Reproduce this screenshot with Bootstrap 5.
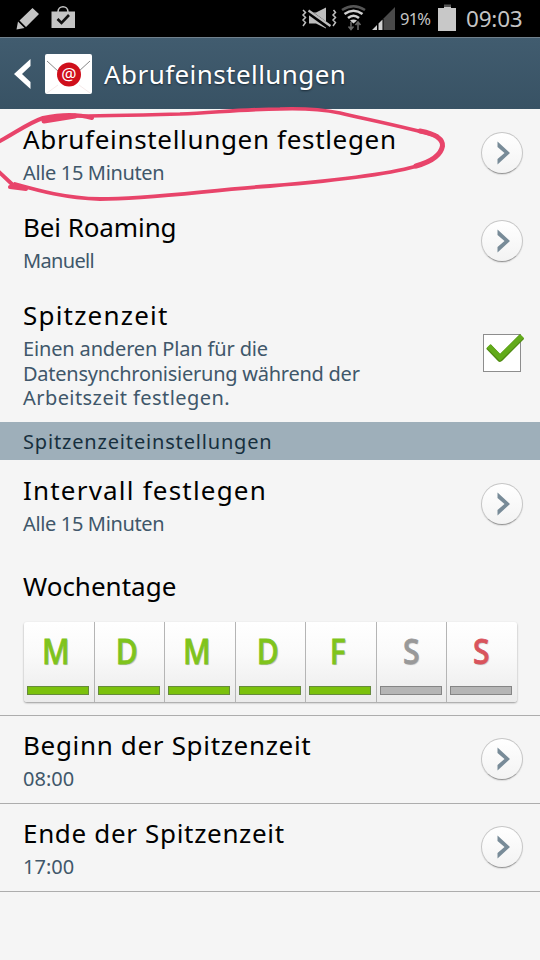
<!DOCTYPE html>
<html lang="de">
<head>
<meta charset="utf-8">
<meta name="viewport" content="width=device-width, initial-scale=1">
<title>Abrufeinstellungen</title>
<link href="https://cdn.jsdelivr.net/npm/bootstrap@5.3.0/dist/css/bootstrap.min.css" rel="stylesheet">
<style>
  body { font-family: "Noto Sans", sans-serif; background: #f5f5f5; width: 540px; height: 960px; overflow: hidden; color: #000; }
  svg { display: block; flex: none; }
  .status-bar { height: 37px; background: #000; color: #c4c4c4; }
  .status-pct { font-size: 16.5px; line-height: 20px; letter-spacing: -.8px; width: 32px; }
  .status-clock { font-size: 22.5px; line-height: 28px; letter-spacing: -.2px; width: 58px; }
  .title-bar { height: 72px; background: linear-gradient(#415c6f, #385264); border-top: 1px solid #71818d; color: #fff; padding-left: 14px; }
  .envelope { margin-left: 14px; }
  .page-title { font-size: 26px; line-height: 32px; letter-spacing: .43px; font-weight: 400; text-shadow: 0 1px 2px #1c2c38; margin-left: 12px; }
  .setting { height: 88px; padding: 14px 17px 0 24px; }
  .setting-tall { height: 137px; }
  .setting-line { padding-top: 13px; border-bottom: 1px solid #adadad; }
  .setting h2, .weekdays h2 { font-size: 26px; line-height: 32px; font-weight: 400; margin: 0 0 0 -1px; white-space: nowrap; }
  .setting p { font-size: 20px; line-height: 24.5px; color: #40576a; margin: 6px 0 0 -1px; white-space: nowrap; }
  .go { width: 42px; height: 42px; margin-top: 9px; border: 1px solid #c6c6c6; border-bottom-color: #999; background: linear-gradient(#fff, #f3f3f3); box-shadow: 0 1px 1px #ddd; }
  .go svg { margin-left: 3px; }
  .tick { margin: 30px -1px 0 0; }
  .section-head { height: 38px; background: #9eafba; color: #172f3e; font-size: 20px; letter-spacing: .83px; padding: 1px 23px 0; }
  .weekdays { height: 168px; padding: 22px 24px 0; border-bottom: 1px solid #adadad; }
  .days { height: 80px; width: 493px; margin: 20px 0 0; border-radius: 3px; background: linear-gradient(#fff, #fafafa 40%, #ebebeb); box-shadow: 0 1px 2px #999; }
  .day { font-size: 35px; line-height: 42px; font-weight: 500; padding: 8px 4px 7px 3px; border-left: 1px solid #b5b5b5; color: #7fc41c; flex: 1 1 0; min-width: 0; }
  .day:first-child { border-left-color: transparent; padding-left: 2px; }
  .day span { display: block; transform: scaleX(.86); text-align: center; margin-left: -5px; text-shadow: 1px 1px 1px #bbb; -webkit-text-stroke: .8px currentColor; }
  .day i { display: block; height: 9px; width: 62px; background: #7bc10c; border: 1px solid #668a3c; }
  .day-off { color: #999; }
  .day-sun { color: #d9545c; }
  .day-off i, .day-sun i { background: #b5b5b5; border-color: #858585; }
  .day-off span, .day-sun span { margin-left: 0; }
  .s1 { letter-spacing: .67px; } .s2 { letter-spacing: -.1px; } .s3 { letter-spacing: 1.2px; }
  .s4 { letter-spacing: -.35px; } .s5 { letter-spacing: -.67px; } .s6 { letter-spacing: -.15px; } .s6b { letter-spacing: -.25px; } .s7 { letter-spacing: .43px; }
  .marker { left: 0; top: 100px; pointer-events: none; }
</style>
</head>
<body class="position-relative">

<header>
  <div class="status-bar d-flex align-items-center">
    <svg width="100" height="37" viewBox="0 0 100 37">
      <g fill="#c4c4c4">
        <path d="M32.500 8l6.500 6-13 13-6.500-6.500zM18 21.500l6.500 6.500-8 1.500z"/>
        <path d="M51.500 11.500h23.500v16.500h-23.500z"/>
      </g>
      <path d="M58 12c0-7 10-7 10 0" fill="none" stroke="#c4c4c4" stroke-width="1.600"/>
      <path d="M57.500 19l4 4 7.500-8" fill="none" stroke="#111" stroke-width="2.600"/>
    </svg>
    <svg class="ms-auto" width="101" height="37" viewBox="300 0 101 37">
      <g fill="none" stroke="#bdbdbd" stroke-width="1.500">
        <path d="M304 10l2.500 2.500-2.500 2.500 2.500 2.500-2.500 2.500 2.500 2.500-2.500 3.500M334.500 10l2 2.500-2.500 2.500 2.500 2.500-2.500 2.500 2.500 2.500-2.500 3.500"/>
      </g>
      <path d="M310 12.500h7l10-5v21l-10-5h-7z" fill="#bdbdbd"/>
      <path d="M309 11.500l22 16" stroke="#000" stroke-width="5"/>
      <path d="M309.500 10.500l22 15.500" stroke="#bdbdbd" stroke-width="2.200"/>
      <g fill="none" stroke-width="2.600">
        <path d="M343 10q11.500-7.500 23 0" stroke="#555"/>
        <path d="M345.500 14q9-6.500 18 0M349 18q5.500-4.500 11 0" stroke="#d0d0d0"/>
      </g>
      <path d="M351 20.500q3.500-2 7 0l-3.500 3z" fill="#d0d0d0"/>
      <path d="M352 22v7M349.500 26.500l2.500 3 2.500-3M359 30v-7M356.500 25l2.500-3 2.500 3" fill="none" stroke="#666" stroke-width="1.600"/>
      <path d="M384.500 18.500l11.500-11.500v23h-11.500z" fill="#4a4a4a"/>
      <path d="M373 30l5-5v5zM379.500 23.500l4-4v10.500h-4z" fill="#d0d0d0"/>
    </svg>
    <span class="status-pct">91%</span>
    <svg width="34" height="37" viewBox="433 0 34 37"><path d="M439 8h6v-1h7v1h5v23h-18z" fill="#c8c8c8"/><path d="M445 4.500h7v2.500h-7z" fill="#555"/></svg>
    <span class="status-clock me-3">09:03</span>
  </div>

  <div class="title-bar d-flex align-items-center">
    <svg width="17" height="30" viewBox="0 0 17 30"><path d="M16.500 0v7l-8.500 8 8.500 8v7L0 15z" fill="#fff"/></svg>
    <svg class="envelope" width="47" height="40" viewBox="0 0 47 40">
      <rect width="47" height="40" rx="2" fill="#fff"/>
      <path d="M2 7l12 11M45 7L33 18" stroke="#888" stroke-width="1"/>
      <path d="M13 31L2 39M34 31l11 8" stroke="#f6eaea" stroke-width="1"/>
      <circle cx="24" cy="20.500" r="12" fill="#cf0f1b"/>
      <text x="24" y="25.500" text-anchor="middle" font-size="17" font-family="Noto Sans, sans-serif" fill="#fff">@</text>
    </svg>
    <h1 class="page-title mb-0">Abrufeinstellungen</h1>
  </div>
</header>

<main>
  <section class="setting d-flex justify-content-between align-items-start">
    <div><h2 class="s1">Abrufeinstellungen festlegen</h2><p class="s4">Alle 15 Minuten</p></div>
    <div class="go rounded-circle d-flex align-items-center justify-content-center"><svg width="13" height="24" viewBox="0 0 13 24"><path d="M.500 .500L13 12 .500 23.500v-5.500L7.500 12 .500 6z" fill="#788b98"/></svg></div>
  </section>
  <section class="setting d-flex justify-content-between align-items-start">
    <div><h2 class="s2">Bei Roaming</h2><p class="s5">Manuell</p></div>
    <div class="go rounded-circle d-flex align-items-center justify-content-center"><svg width="13" height="24" viewBox="0 0 13 24"><path d="M.500 .500L13 12 .500 23.500v-5.500L7.500 12 .500 6z" fill="#788b98"/></svg></div>
  </section>
  <section class="setting setting-tall d-flex justify-content-between align-items-start">
    <div><h2 class="s3">Spitzenzeit</h2><p class="s6">Einen anderen Plan für die<br><span class="s6b">Datensynchronisierung während der</span><br><span class="s7">Arbeitszeit festlegen.</span></p></div>
    <svg class="tick" width="42" height="44" viewBox="482 329 42 44">
      <rect x="483.500" y="334.500" width="37" height="37" fill="#fff" stroke="#8d8d8d"/>
      <path d="M488.500 346.500l11.500 12L522 336.500" fill="none" stroke="#4f8a12" stroke-width="6.500" stroke-linejoin="round"/>
      <path d="M488.500 346l11.500 11.500L522 336" fill="none" stroke="#62ab1a" stroke-width="5"/>
    </svg>
  </section>

  <div class="section-head d-flex align-items-center">Spitzenzeiteinstellungen</div>

  <section class="setting d-flex justify-content-between align-items-start">
    <div><h2 class="s3">Intervall festlegen</h2><p class="s4">Alle 15 Minuten</p></div>
    <div class="go rounded-circle d-flex align-items-center justify-content-center"><svg width="13" height="24" viewBox="0 0 13 24"><path d="M.500 .500L13 12 .500 23.500v-5.500L7.500 12 .500 6z" fill="#788b98"/></svg></div>
  </section>

  <section class="weekdays">
    <h2>Wochentage</h2>
    <div class="days d-flex">
      <div class="day d-flex flex-column justify-content-between"><span>M</span><i></i></div>
      <div class="day d-flex flex-column justify-content-between"><span>D</span><i></i></div>
      <div class="day d-flex flex-column justify-content-between"><span>M</span><i></i></div>
      <div class="day d-flex flex-column justify-content-between"><span>D</span><i></i></div>
      <div class="day d-flex flex-column justify-content-between"><span>F</span><i></i></div>
      <div class="day day-off d-flex flex-column justify-content-between"><span>S</span><i></i></div>
      <div class="day day-sun d-flex flex-column justify-content-between"><span>S</span><i></i></div>
    </div>
  </section>

  <section class="setting setting-line d-flex justify-content-between align-items-start">
    <div><h2 class="s1">Beginn der Spitzenzeit</h2><p>08:00</p></div>
    <div class="go rounded-circle d-flex align-items-center justify-content-center"><svg width="13" height="24" viewBox="0 0 13 24"><path d="M.500 .500L13 12 .500 23.500v-5.500L7.500 12 .500 6z" fill="#788b98"/></svg></div>
  </section>
  <section class="setting setting-line d-flex justify-content-between align-items-start">
    <div><h2 class="s1">Ende der Spitzenzeit</h2><p>17:00</p></div>
    <div class="go rounded-circle d-flex align-items-center justify-content-center"><svg width="13" height="24" viewBox="0 0 13 24"><path d="M.500 .500L13 12 .500 23.500v-5.500L7.500 12 .500 6z" fill="#788b98"/></svg></div>
  </section>
</main>

<!-- red pen stroke over the first setting -->
<svg class="marker position-absolute" width="460" height="110" viewBox="0 100 460 110">
  <g fill="none" stroke="#e8446a" stroke-linecap="round" stroke-linejoin="round">
    <path d="M92 118C78 114 62 114 43 118C28 123 14 134-2 142" stroke-width="4"/>
    <path d="M44 121L75 116" stroke-width="5"/>
    <path d="M70 116C90 116 140 115 180 114C220 112 250 109 280 109C310 108 325 110 340 113C370 120 410 128 437 136" stroke-width="3.600"/>
    <path d="M420 131C436 134 443 139 442.500 146C441 155 430 162 416 166" stroke-width="5"/>
    <path d="M420 165C390 175 330 181 270 186C210 190 150 199 100 199C65 198 40 191 15 184" stroke-width="3.800"/>
    <path d="M-2 171L14 186M10 187L26 189" stroke-width="4"/>
  </g>
</svg>

<script src="https://cdn.jsdelivr.net/npm/bootstrap@5.3.0/dist/js/bootstrap.bundle.min.js"></script>
</body>
</html>
